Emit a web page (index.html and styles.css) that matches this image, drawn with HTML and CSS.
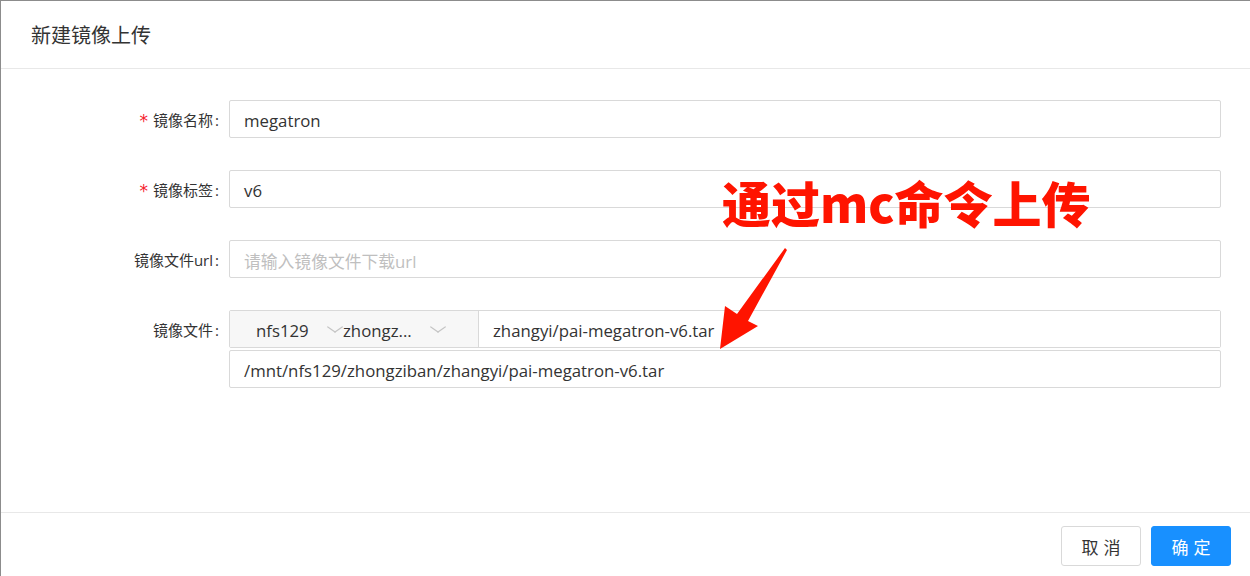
FILE: index.html
```html
<!DOCTYPE html>
<html lang="zh-CN">
<head>
<meta charset="utf-8">
<title>新建镜像上传</title>
<link rel="stylesheet" href="styles.css">
</head>
<body>
<div class="modal">
  <div class="modal-header">
    <div class="modal-title">新建镜像上传</div>
  </div>
  <div class="modal-body">
    <div class="form-row">
      <label class="form-label"><span class="req">*</span>镜像名称<span class="colon">:</span></label>
      <div class="form-control"><div class="input">megatron</div></div>
    </div>
    <div class="form-row">
      <label class="form-label"><span class="req">*</span>镜像标签<span class="colon">:</span></label>
      <div class="form-control"><div class="input">v6</div></div>
    </div>
    <div class="form-row">
      <label class="form-label">镜像文件url<span class="colon">:</span></label>
      <div class="form-control"><div class="input placeholder">请输入镜像文件下载url</div></div>
    </div>
    <div class="form-row">
      <label class="form-label">镜像文件<span class="colon">:</span></label>
      <div class="form-control stack">
        <div class="group">
          <div class="select sel1"><span>nfs129</span><i class="arrow"></i></div>
          <div class="select sel2"><span>zhongz...</span><i class="arrow"></i></div>
          <div class="group-input">zhangyi/pai-megatron-v6.tar</div>
        </div>
        <div class="input">/mnt/nfs129/zhongziban/zhangyi/pai-megatron-v6.tar</div>
      </div>
    </div>
  </div>
  <div class="modal-footer">
    <button class="btn">取消</button>
    <button class="btn primary">确定</button>
  </div>

  <div class="note">通过mc命令上传</div>
  <svg class="note-arrow" width="80" height="110" viewBox="710 244 80 110">
    <polygon fill="#ff1400" points="785,248 787,250 748,321 758,326 720,349 725,306 737,314"/>
  </svg>
</div>
</body>
</html>
```

FILE: styles.css
```css
* { box-sizing: border-box; }
html, body { margin: 0; padding: 0; }
body {
  width: 1250px;
  height: 576px;
  overflow: hidden;
  background: #fff;
  font-family: "Open Sans", "Noto Sans CJK SC", sans-serif;
  color: #333;
}
.modal {
  position: relative;
  height: 576px;
  display: flex;
  flex-direction: column;
  border-top: 1px solid #8c8c8c;
  border-left: 1px solid #8c8c8c;
}
.modal-header {
  height: 68px;
  border-bottom: 1px solid #e8e8e8;
  display: flex;
  align-items: center;
  padding-left: 30px;
  padding-bottom: 1px;
}
.modal-title {
  font-family: "Noto Sans CJK SC", sans-serif;
  font-size: 20px;
  color: #333;
}
.modal-body {
  flex: 1;
  padding-top: 31px;
}
.form-row {
  display: flex;
  margin-bottom: 32px;
}
.form-label {
  width: 228px;
  flex: none;
  height: 38px;
  line-height: 40px;
  text-align: right;
  padding-right: 10px;
  font-family: "Open Sans", "Noto Sans CJK SC", sans-serif;
  font-size: 15px;
  color: #333;
}
.colon { margin-left: 2px; }
.req {
  color: #f5222d;
  margin-right: 5px;
  font-family: "DejaVu Sans", sans-serif;
  font-size: 17px;
  vertical-align: -1px;
}
.form-control {
  width: 992px;
}
.stack {
  display: flex;
  flex-direction: column;
  gap: 2px;
}
.input {
  height: 38px;
  border: 1px solid #d9d9d9;
  border-radius: 2px;
  padding: 3px 0 0 14px;
  display: flex;
  align-items: center;
  font-size: 16.8px;
  color: #333;
}
.placeholder { color: #bfbfbf; }
.group {
  display: flex;
  height: 38px;
  border: 1px solid #d9d9d9;
  border-radius: 2px;
  font-size: 16.8px;
}
.select {
  display: flex;
  align-items: center;
  background: #f7f7f7;
  color: #333;
  padding-top: 3px;
}
.sel1 { width: 112px; padding-left: 26px; }
.sel1 .arrow { margin-left: 22px; }
.sel2 { width: 137px; padding-left: 1px; border-right: 1px solid #d9d9d9; }
.sel2 .arrow { margin-left: 22px; }
.arrow {
  width: 8px;
  height: 8px;
  border-right: 1px solid #c4c4c4;
  border-bottom: 1px solid #c4c4c4;
  transform: translateY(-4px) scaleX(1.45) rotate(45deg);
  transform-origin: center;
  margin: 0 2px;
}
.group-input {
  flex: 1;
  display: flex;
  align-items: center;
  padding: 3px 0 0 14px;
  background: #fff;
  color: #333;
}
.modal-footer {
  height: 64px;
  border-top: 1px solid #e8e8e8;
  display: flex;
  justify-content: flex-end;
  gap: 10px;
  padding: 13px 19px 0 0;
}
.btn {
  width: 80px;
  height: 40px;
  border: 1px solid #d9d9d9;
  border-radius: 3px;
  background: #fff;
  font-family: "Noto Sans CJK SC", sans-serif;
  font-size: 17px;
  color: #333;
  letter-spacing: 0.3em;
  text-indent: 0.3em;
  padding: 0;
}
.btn.primary {
  background: #1890ff;
  border-color: #1890ff;
  color: #fff;
}
.note {
  position: absolute;
  left: 721px;
  top: 171px;
  font-family: "Noto Sans CJK SC", sans-serif;
  font-weight: 900;
  font-size: 49px;
  line-height: 60px;
  color: #ff1400;
  white-space: nowrap;
}
.note-arrow {
  position: absolute;
  left: 709px;
  top: 243px;
}
```
